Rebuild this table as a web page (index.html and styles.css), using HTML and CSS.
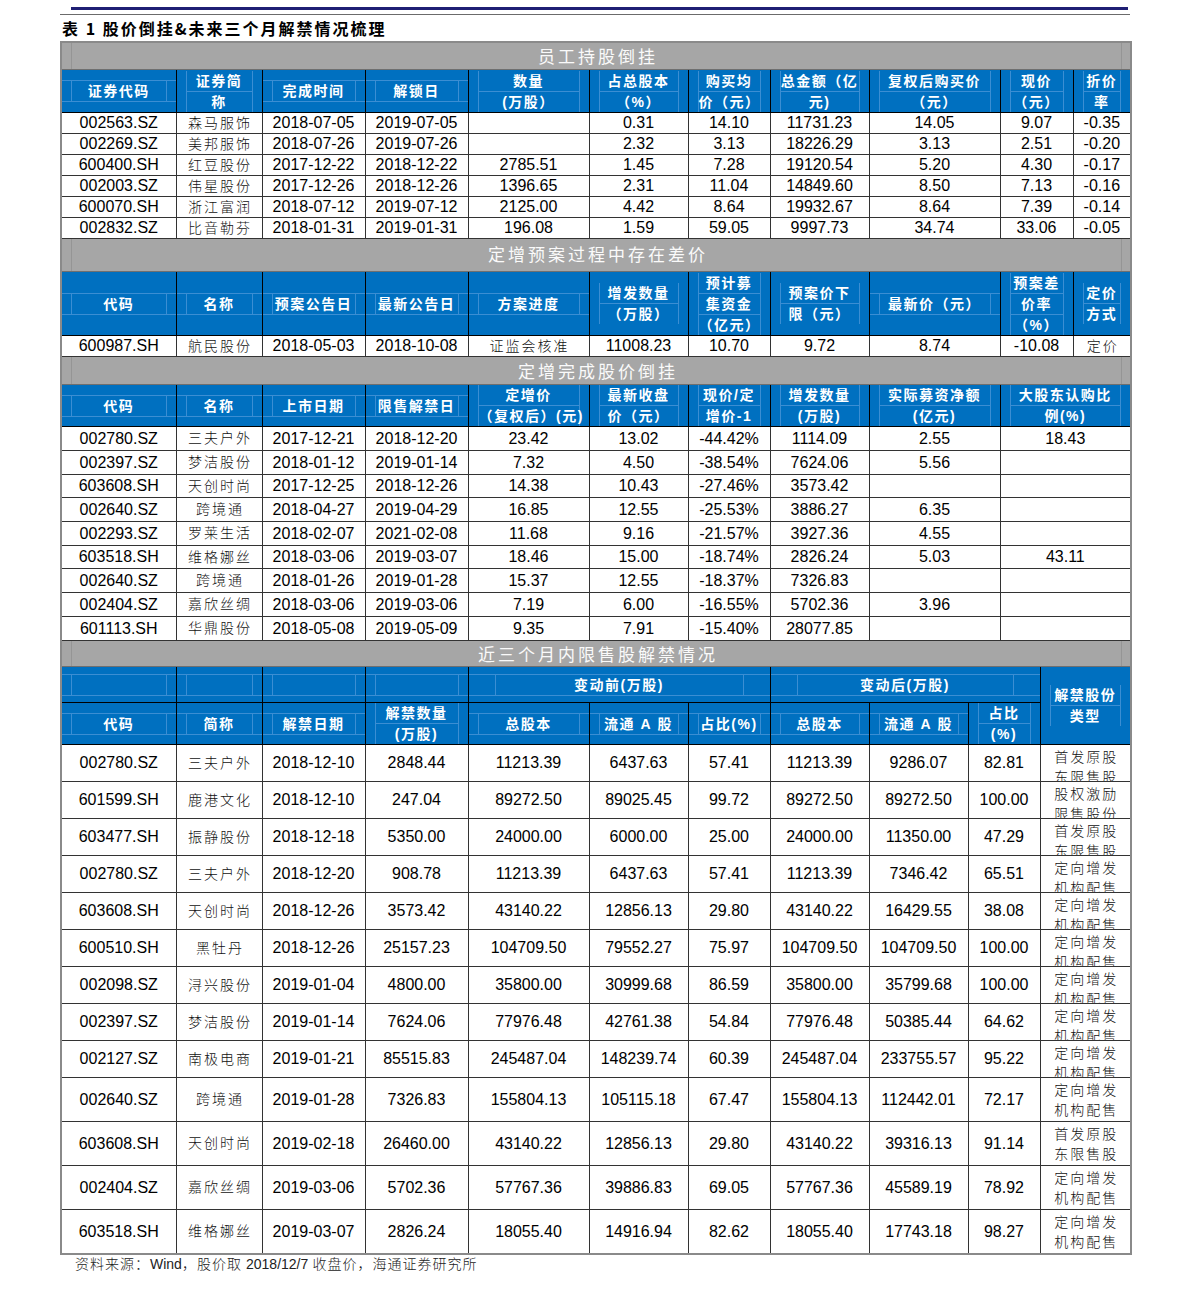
FILE: index.html
```html
<!DOCTYPE html>
<html lang="zh-CN">
<head>
<meta charset="utf-8">
<title>表 1 股价倒挂&amp;未来三个月解禁情况梳理</title>
<link rel="stylesheet" href="styles.css">
</head>
<body>
<div class="page">
  <div class="rule-navy"></div>
  <div class="rule-thin"></div>
  <h1 class="caption">表 1 股价倒挂&amp;未来三个月解禁情况梳理</h1>
  <table class="t">
    <colgroup>
      <col class="c1"><col class="c2"><col class="c3"><col class="c4"><col class="c5"><col class="c6"><col class="c7"><col class="c8"><col class="c9"><col class="c10"><col class="c11"><col class="c12"><col class="c13">
    </colgroup>

    <!-- Section 1 -->
    <tr class="sec h27"><td colspan="13"><div class="sec-in s27">员工持股倒挂</div></td></tr>
    <tr class="hd h43">
      <th><div class="in one"><p>证券代码</p></div></th>
      <th><div class="in"><p>证券简</p><p>称</p></div></th>
      <th><div class="in one"><p>完成时间</p></div></th>
      <th><div class="in one"><p>解锁日</p></div></th>
      <th><div class="in"><p>数量</p><p>(万股）</p></div></th>
      <th><div class="in"><p>占总股本</p><p>（%）</p></div></th>
      <th><div class="in"><p>购买均</p><p>价（元）</p></div></th>
      <th><div class="in"><p>总金额（亿</p><p>元)</p></div></th>
      <th colspan="2"><div class="in"><p>复权后购买价</p><p>（元）</p></div></th>
      <th colspan="2"><div class="in"><p>现价</p><p>（元）</p></div></th>
      <th><div class="in"><p>折价</p><p>率</p></div></th>
    </tr>
    <tr class="h21"><td>002563.SZ</td><td class="cn">森马服饰</td><td>2018-07-05</td><td>2019-07-05</td><td></td><td>0.31</td><td>14.10</td><td>11731.23</td><td colspan="2">14.05</td><td colspan="2">9.07</td><td>-0.35</td></tr>
    <tr class="h21"><td>002269.SZ</td><td class="cn">美邦服饰</td><td>2018-07-26</td><td>2019-07-26</td><td></td><td>2.32</td><td>3.13</td><td>18226.29</td><td colspan="2">3.13</td><td colspan="2">2.51</td><td>-0.20</td></tr>
    <tr class="h21"><td>600400.SH</td><td class="cn">红豆股份</td><td>2017-12-22</td><td>2018-12-22</td><td>2785.51</td><td>1.45</td><td>7.28</td><td>19120.54</td><td colspan="2">5.20</td><td colspan="2">4.30</td><td>-0.17</td></tr>
    <tr class="h21"><td>002003.SZ</td><td class="cn">伟星股份</td><td>2017-12-26</td><td>2018-12-26</td><td>1396.65</td><td>2.31</td><td>11.04</td><td>14849.60</td><td colspan="2">8.50</td><td colspan="2">7.13</td><td>-0.16</td></tr>
    <tr class="h21"><td>600070.SH</td><td class="cn">浙江富润</td><td>2018-07-12</td><td>2019-07-12</td><td>2125.00</td><td>4.42</td><td>8.64</td><td>19932.67</td><td colspan="2">8.64</td><td colspan="2">7.39</td><td>-0.14</td></tr>
    <tr class="h21"><td>002832.SZ</td><td class="cn">比音勒芬</td><td>2018-01-31</td><td>2019-01-31</td><td>196.08</td><td>1.59</td><td>59.05</td><td>9997.73</td><td colspan="2">34.74</td><td colspan="2">33.06</td><td>-0.05</td></tr>

    <!-- Section 2 -->
    <tr class="sec h33"><td colspan="13"><div class="sec-in s33">定增预案过程中存在差价</div></td></tr>
    <tr class="hd h64">
      <th><div class="in one"><p>代码</p></div></th>
      <th><div class="in one"><p>名称</p></div></th>
      <th><div class="in one"><p>预案公告日</p></div></th>
      <th><div class="in one"><p>最新公告日</p></div></th>
      <th><div class="in one"><p>方案进度</p></div></th>
      <th><div class="in"><p>增发数量</p><p>（万股）</p></div></th>
      <th><div class="in"><p>预计募</p><p>集资金</p><p>（亿元）</p></div></th>
      <th><div class="in"><p>预案价下</p><p>限（元）</p></div></th>
      <th colspan="2"><div class="in one"><p>最新价（元）</p></div></th>
      <th colspan="2"><div class="in"><p>预案差</p><p>价率</p><p>（%）</p></div></th>
      <th><div class="in"><p>定价</p><p>方式</p></div></th>
    </tr>
    <tr class="h21"><td>600987.SH</td><td class="cn">航民股份</td><td>2018-05-03</td><td>2018-10-08</td><td class="cn">证监会核准</td><td>11008.23</td><td>10.70</td><td>9.72</td><td colspan="2">8.74</td><td colspan="2">-10.08</td><td class="cn">定价</td></tr>

    <!-- Section 3 -->
    <tr class="sec h28"><td colspan="13"><div class="sec-in s28">定增完成股价倒挂</div></td></tr>
    <tr class="hd h42">
      <th><div class="in one"><p>代码</p></div></th>
      <th><div class="in one"><p>名称</p></div></th>
      <th><div class="in one"><p>上市日期</p></div></th>
      <th><div class="in one"><p>限售解禁日</p></div></th>
      <th><div class="in"><p>定增价</p><p>（复权后）(元)</p></div></th>
      <th><div class="in"><p>最新收盘</p><p>价（元）</p></div></th>
      <th><div class="in"><p>现价/定</p><p>增价-1</p></div></th>
      <th><div class="in"><p>增发数量</p><p>(万股)</p></div></th>
      <th colspan="2"><div class="in"><p>实际募资净额</p><p>(亿元)</p></div></th>
      <th colspan="3"><div class="in"><p>大股东认购比</p><p>例(%)</p></div></th>
    </tr>
    <tr class="h24"><td>002780.SZ</td><td class="cn">三夫户外</td><td>2017-12-21</td><td>2018-12-20</td><td>23.42</td><td>13.02</td><td>-44.42%</td><td>1114.09</td><td colspan="2">2.55</td><td colspan="3">18.43</td></tr>
    <tr class="h24"><td>002397.SZ</td><td class="cn">梦洁股份</td><td>2018-01-12</td><td>2019-01-14</td><td>7.32</td><td>4.50</td><td>-38.54%</td><td>7624.06</td><td colspan="2">5.56</td><td colspan="3"></td></tr>
    <tr class="h23"><td>603608.SH</td><td class="cn">天创时尚</td><td>2017-12-25</td><td>2018-12-26</td><td>14.38</td><td>10.43</td><td>-27.46%</td><td>3573.42</td><td colspan="2"></td><td colspan="3"></td></tr>
    <tr class="h24"><td>002640.SZ</td><td class="cn">跨境通</td><td>2018-04-27</td><td>2019-04-29</td><td>16.85</td><td>12.55</td><td>-25.53%</td><td>3886.27</td><td colspan="2">6.35</td><td colspan="3"></td></tr>
    <tr class="h24"><td>002293.SZ</td><td class="cn">罗莱生活</td><td>2018-02-07</td><td>2021-02-08</td><td>11.68</td><td>9.16</td><td>-21.57%</td><td>3927.36</td><td colspan="2">4.55</td><td colspan="3"></td></tr>
    <tr class="h23"><td>603518.SH</td><td class="cn">维格娜丝</td><td>2018-03-06</td><td>2019-03-07</td><td>18.46</td><td>15.00</td><td>-18.74%</td><td>2826.24</td><td colspan="2">5.03</td><td colspan="3">43.11</td></tr>
    <tr class="h24"><td>002640.SZ</td><td class="cn">跨境通</td><td>2018-01-26</td><td>2019-01-28</td><td>15.37</td><td>12.55</td><td>-18.37%</td><td>7326.83</td><td colspan="2"></td><td colspan="3"></td></tr>
    <tr class="h24"><td>002404.SZ</td><td class="cn">嘉欣丝绸</td><td>2018-03-06</td><td>2019-03-06</td><td>7.19</td><td>6.00</td><td>-16.55%</td><td>5702.36</td><td colspan="2">3.96</td><td colspan="3"></td></tr>
    <tr class="h24"><td>601113.SH</td><td class="cn">华鼎股份</td><td>2018-05-08</td><td>2019-05-09</td><td>9.35</td><td>7.91</td><td>-15.40%</td><td>28077.85</td><td colspan="2"></td><td colspan="3"></td></tr>

    <!-- Section 4 -->
    <tr class="sec h26"><td colspan="13"><div class="sec-in s26">近三个月内限售股解禁情况</div></td></tr>
    <tr class="hd h36">
      <th><div class="in one"><p></p></div></th>
      <th><div class="in one"><p></p></div></th>
      <th><div class="in one"><p></p></div></th>
      <th><div class="in one"><p></p></div></th>
      <th colspan="3"><div class="in one wide"><p>变动前(万股)</p></div></th>
      <th colspan="4"><div class="in one wide"><p>变动后(万股)</p></div></th>
      <th colspan="2" rowspan="2"><div class="in"><p>解禁股份</p><p>类型</p></div></th>
    </tr>
    <tr class="hd h42">
      <th><div class="in one"><p>代码</p></div></th>
      <th><div class="in one"><p>简称</p></div></th>
      <th><div class="in one"><p>解禁日期</p></div></th>
      <th><div class="in"><p>解禁数量</p><p>(万股)</p></div></th>
      <th><div class="in one"><p>总股本</p></div></th>
      <th><div class="in one"><p>流通 <b>A</b> 股</p></div></th>
      <th><div class="in one"><p>占比(%)</p></div></th>
      <th><div class="in one"><p>总股本</p></div></th>
      <th><div class="in one"><p>流通 <b>A</b> 股</p></div></th>
      <th colspan="2"><div class="in"><p>占比</p><p>(%)</p></div></th>
    </tr>
    <tr class="h37"><td>002780.SZ</td><td class="cn">三夫户外</td><td>2018-12-10</td><td>2848.44</td><td>11213.39</td><td>6437.63</td><td>57.41</td><td>11213.39</td><td>9286.07</td><td colspan="2">82.81</td><td colspan="2" class="tp"><div class="tpw w37">首发原股<br>东限售股</div></td></tr>
    <tr class="h37"><td>601599.SH</td><td class="cn">鹿港文化</td><td>2018-12-10</td><td>247.04</td><td>89272.50</td><td>89025.45</td><td>99.72</td><td>89272.50</td><td>89272.50</td><td colspan="2">100.00</td><td colspan="2" class="tp"><div class="tpw w37">股权激励<br>限售股份</div></td></tr>
    <tr class="h37"><td>603477.SH</td><td class="cn">振静股份</td><td>2018-12-18</td><td>5350.00</td><td>24000.00</td><td>6000.00</td><td>25.00</td><td>24000.00</td><td>11350.00</td><td colspan="2">47.29</td><td colspan="2" class="tp"><div class="tpw w37">首发原股<br>东限售股</div></td></tr>
    <tr class="h37"><td>002780.SZ</td><td class="cn">三夫户外</td><td>2018-12-20</td><td>908.78</td><td>11213.39</td><td>6437.63</td><td>57.41</td><td>11213.39</td><td>7346.42</td><td colspan="2">65.51</td><td colspan="2" class="tp"><div class="tpw w37">定向增发<br>机构配售</div></td></tr>
    <tr class="h37"><td>603608.SH</td><td class="cn">天创时尚</td><td>2018-12-26</td><td>3573.42</td><td>43140.22</td><td>12856.13</td><td>29.80</td><td>43140.22</td><td>16429.55</td><td colspan="2">38.08</td><td colspan="2" class="tp"><div class="tpw w37">定向增发<br>机构配售</div></td></tr>
    <tr class="h37"><td>600510.SH</td><td class="cn">黑牡丹</td><td>2018-12-26</td><td>25157.23</td><td>104709.50</td><td>79552.27</td><td>75.97</td><td>104709.50</td><td>104709.50</td><td colspan="2">100.00</td><td colspan="2" class="tp"><div class="tpw w37">定向增发<br>机构配售</div></td></tr>
    <tr class="h37"><td>002098.SZ</td><td class="cn">浔兴股份</td><td>2019-01-04</td><td>4800.00</td><td>35800.00</td><td>30999.68</td><td>86.59</td><td>35800.00</td><td>35799.68</td><td colspan="2">100.00</td><td colspan="2" class="tp"><div class="tpw w37">定向增发<br>机构配售</div></td></tr>
    <tr class="h37"><td>002397.SZ</td><td class="cn">梦洁股份</td><td>2019-01-14</td><td>7624.06</td><td>77976.48</td><td>42761.38</td><td>54.84</td><td>77976.48</td><td>50385.44</td><td colspan="2">64.62</td><td colspan="2" class="tp"><div class="tpw w37">定向增发<br>机构配售</div></td></tr>
    <tr class="h37"><td>002127.SZ</td><td class="cn">南极电商</td><td>2019-01-21</td><td>85515.83</td><td>245487.04</td><td>148239.74</td><td>60.39</td><td>245487.04</td><td>233755.57</td><td colspan="2">95.22</td><td colspan="2" class="tp"><div class="tpw w37">定向增发<br>机构配售</div></td></tr>
    <tr class="h44"><td>002640.SZ</td><td class="cn">跨境通</td><td>2019-01-28</td><td>7326.83</td><td>155804.13</td><td>105115.18</td><td>67.47</td><td>155804.13</td><td>112442.01</td><td colspan="2">72.17</td><td colspan="2" class="tp"><div class="tpw w44">定向增发<br>机构配售</div></td></tr>
    <tr class="h44"><td>603608.SH</td><td class="cn">天创时尚</td><td>2019-02-18</td><td>26460.00</td><td>43140.22</td><td>12856.13</td><td>29.80</td><td>43140.22</td><td>39316.13</td><td colspan="2">91.14</td><td colspan="2" class="tp"><div class="tpw w44">首发原股<br>东限售股</div></td></tr>
    <tr class="h44"><td>002404.SZ</td><td class="cn">嘉欣丝绸</td><td>2019-03-06</td><td>5702.36</td><td>57767.36</td><td>39886.83</td><td>69.05</td><td>57767.36</td><td>45589.19</td><td colspan="2">78.92</td><td colspan="2" class="tp"><div class="tpw w44">定向增发<br>机构配售</div></td></tr>
    <tr class="h44"><td>603518.SH</td><td class="cn">维格娜丝</td><td>2019-03-07</td><td>2826.24</td><td>18055.40</td><td>14916.94</td><td>82.62</td><td>18055.40</td><td>17743.18</td><td colspan="2">98.27</td><td colspan="2" class="tp"><div class="tpw w44">定向增发<br>机构配售</div></td></tr>
  </table>
  <p class="source">资料来源：<span class="lt">Wind</span>，股价取 <span class="lt">2018/12/7</span> 收盘价，海通证券研究所</p>
</div>
</body>
</html>
```

FILE: styles.css
```css
html, body {
  margin: 0;
  padding: 0;
  background: #ffffff;
}

body {
  font-family: "Liberation Sans", "Noto Sans CJK SC", sans-serif;
  color: #000;
}

.page {
  width: 1070px;
  padding: 7px 0 0 60px;
}

.rule-navy {
  height: 3px;
  margin: 0 2px 0 11px;
  background: #1f1f74;
}

.rule-thin {
  height: 1px;
  margin-top: 4px;
  background: #6b6b6b;
}

.caption {
  margin: 0;
  height: 26px;
  line-height: 26px;
  padding-left: 2px;
  font-family: "Noto Sans CJK SC", sans-serif;
  font-size: 16px;
  font-weight: 700;
  letter-spacing: 2px;
  color: #000;
}

/* ---------- table ---------- */
.t {
  border-collapse: collapse;
  table-layout: fixed;
  width: 1070px;
  border: 2px solid #8a8a8a;
}

.c1 { width: 115px; }
.c2 { width: 86px; }
.c3 { width: 103px; }
.c4 { width: 103px; }
.c5 { width: 121px; }
.c6 { width: 99px; }
.c7 { width: 82px; }
.c8 { width: 99px; }
.c9 { width: 99px; }
.c10 { width: 32px; }
.c11 { width: 40px; }
.c12 { width: 33px; }
.c13 { width: 58px; }

.t td,
.t th {
  padding: 0;
  border: 1px solid #333;
  text-align: center;
  white-space: nowrap;
  overflow: hidden;
}

.t td {
  font-size: 16px;
  color: #000;
}

.h21 { height: 21px; }
.h23 { height: 23px; }
.h24 { height: 24px; }
.h26 { height: 26px; }
.h27 { height: 27px; }
.h28 { height: 28px; }
.h33 { height: 33px; }
.h36 { height: 36px; }
.h37 { height: 37px; }
.h42 { height: 42px; }
.h43 { height: 43px; }
.h44 { height: 44px; }
.h64 { height: 64px; }

/* section title bars */
.sec td {
  background: #a6a6a6;
  border-color: #6f6f6f;
}

.sec-in {
  margin: 0 8px 0 9px;
  border-left: 1px solid #959595;
  border-right: 1px solid #959595;
  font-family: "Noto Sans CJK SC", sans-serif;
  font-size: 17px;
  letter-spacing: 3px;
  color: #fafafa;
  padding-left: 3px;
}

.s26 { line-height: 25px; }
.s27 { line-height: 26px; }
.s28 { line-height: 27px; }
.s33 { line-height: 30px; padding-bottom: 2px; }

/* blue header */
.hd th {
  background: #0070c0;
  border-color: #000;
  color: #fff;
  font-family: "Liberation Sans", "Noto Sans CJK SC", sans-serif;
  font-size: 14px;
  font-weight: 700;
  letter-spacing: 1.5px;
  vertical-align: middle;
}

.in {
  margin: 0 9px;
  border-left: 1px solid #3b8ed3;
  border-right: 1px solid #3b8ed3;
}

.in p {
  margin: 0;
  height: 20px;
  line-height: 20px;
  overflow: visible;
}

.in p + p {
  border-top: 1px solid #3b8ed3;
}

/* single-line header cells: light rules run the full cell width,
   the light verticals sit inside them */
.in.one {
  margin: 0;
  border-left: 0;
  border-right: 0;
  border-top: 1px solid #3b8ed3;
  border-bottom: 1px solid #3b8ed3;
}

.in.one p {
  margin: 0 9px;
  border-left: 1px solid #3b8ed3;
  border-right: 1px solid #3b8ed3;
}

.in.wide p {
  margin: 0 26px;
}

.in b {
  font-family: "Liberation Sans", sans-serif;
  font-weight: 700;
}

/* Chinese data cells */
.t td.cn {
  font-family: "Noto Sans CJK SC", sans-serif;
  font-size: 14px;
  font-weight: 300;
  letter-spacing: 2px;
  line-height: 16px;
  padding: 0 0 3px 2px;
  color: #111;
}

.t td.tp {
  vertical-align: top;
  white-space: nowrap;
}

.tpw {
  font-family: "Noto Sans CJK SC", sans-serif;
  font-size: 14px;
  font-weight: 300;
  letter-spacing: 2px;
  line-height: 20px;
  color: #111;
  padding: 1px 0 0 2px;
  text-align: center;
  overflow: hidden;
}

.w37 { height: 35px; }
.w44 { height: 42px; }

/* footnote */
.source {
  margin: 0 0 0 15px;
  font-family: "Noto Sans CJK SC", sans-serif;
  font-size: 14px;
  font-weight: 300;
  letter-spacing: 1px;
  line-height: 16px;
  color: #222;
}

.source .lt {
  font-family: "Liberation Sans", sans-serif;
  font-size: 14px;
  letter-spacing: 0;
}
```
